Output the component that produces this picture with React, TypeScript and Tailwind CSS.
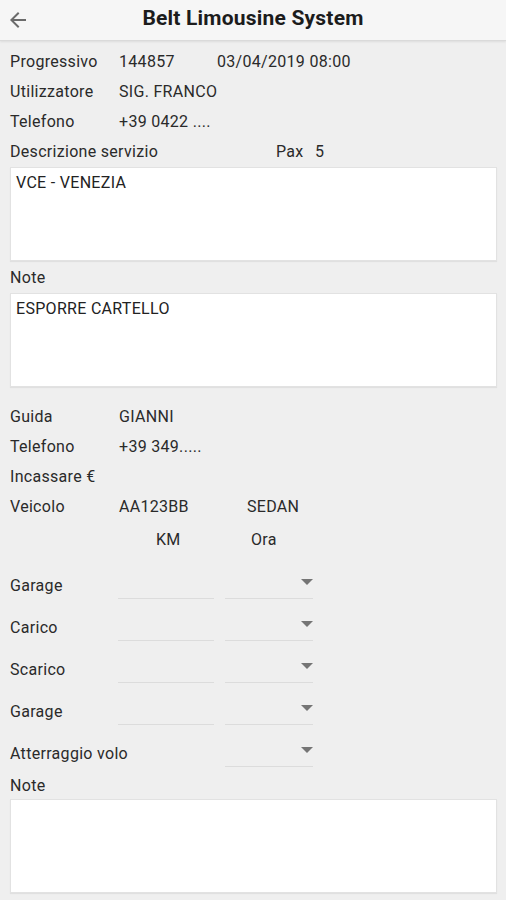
import React from "react";

const font = { fontFamily: "Roboto, 'Noto Sans', sans-serif" };

function InfoRow({ label, value, extra, extraLeft }: { label: string; value?: string; extra?: string; extraLeft?: string }) {
  return (
    <div className="flex h-[30px] items-center pl-[10px] text-[16px] tracking-[0.3px] text-[#2a2a2a]">
      <div className="w-[109px] shrink-0">{label}</div>
      {value && <div className={extraLeft ?? "w-[98px]"}>{value}</div>}
      {extra && <div>{extra}</div>}
    </div>
  );
}

function Box({ text }: { text?: string }) {
  return (
    <div className="ml-[10px] mr-[9px] h-[94px] border border-[#e2e2e2] bg-white px-[5px] pt-[3px] text-[16px] tracking-[0.3px] text-[#222] shadow-[0_1px_1px_rgba(0,0,0,0.06)]">
      {text}
    </div>
  );
}

function TimeRow({ label, km = true }: { label: string; km?: boolean }) {
  return (
    <div className="flex h-[42px] items-center pl-[10px] text-[16px] tracking-[0.3px] text-[#2a2a2a]">
      <div className="w-[108px] shrink-0 whitespace-nowrap">{label}</div>
      <div className={km ? "h-[26px] w-[96px] border-b border-[#dcdcdc]" : "h-[26px] w-[96px]"} />
      <div className="relative ml-[11px] h-[26px] w-[88px] border-b border-[#dcdcdc]">
        <div className="absolute right-0 top-[6px] h-0 w-0 border-x-[6px] border-t-[6px] border-x-transparent border-t-[#757575]" />
      </div>
    </div>
  );
}

export default function App() {
  return (
    <div className="min-h-[900px] w-[506px] bg-[#efefef]" style={font}>
      <div className="relative flex h-[41px] items-center justify-center border-b border-[#dadada] bg-[#f6f6f6] shadow-[0_1px_2px_rgba(0,0,0,0.08)]">
        <svg className="absolute left-[6px] top-[8px]" width="24" height="24" viewBox="0 0 24 24" fill="#6b6b6b">
          <path d="M20 11H7.83l5.59-5.59L12 4l-8 8 8 8 1.41-1.41L7.83 13H20v-2z" />
        </svg>
        <div className="mb-[2px] text-[21px] font-bold tracking-[0.2px] text-[#1c1c1c]">Belt Limousine System</div>
      </div>

      <div className="pt-[6px]">
        <InfoRow label="Progressivo" value="144857" extra="03/04/2019 08:00" />
        <InfoRow label="Utilizzatore" value="SIG. FRANCO" extraLeft="" />
        <InfoRow label="Telefono" value="+39 0422 ...." extraLeft="" />
        <div className="flex h-[30px] items-center pl-[10px] text-[16px] tracking-[0.3px] text-[#2a2a2a]">
          <div className="w-[266px] shrink-0">Descrizione servizio</div>
          <div className="w-[39px]">Pax</div>
          <div>5</div>
        </div>
        <div>
          <Box text="VCE - VENEZIA" />
        </div>
        <div className="mt-[2px] flex h-[30px] items-center pl-[10px] text-[16px] tracking-[0.3px] text-[#2a2a2a]">Note</div>
        <Box text="ESPORRE CARTELLO" />

        <div className="mt-[15px]">
          <InfoRow label="Guida" value="GIANNI" extraLeft="" />
          <InfoRow label="Telefono" value="+39 349....." extraLeft="" />
          <InfoRow label="Incassare €" />
          <InfoRow label="Veicolo" value="AA123BB" extra="SEDAN" extraLeft="w-[128px]" />
        </div>

        <div className="mt-[3px] flex h-[30px] items-center text-[16px] tracking-[0.3px] text-[#2a2a2a]">
          <div className="ml-[156px] w-[95px]">KM</div>
          <div>Ora</div>
        </div>

        <div className="mt-[10px]">
          <TimeRow label="Garage" />
          <TimeRow label="Carico" />
          <TimeRow label="Scarico" />
          <TimeRow label="Garage" />
          <TimeRow label="Atterraggio volo" km={false} />
        </div>

        <div className="flex h-[22px] items-center pl-[10px] text-[16px] tracking-[0.3px] text-[#2a2a2a]">Note</div>
        <div className="mt-[2px]">
          <Box />
        </div>
      </div>
    </div>
  );
}
